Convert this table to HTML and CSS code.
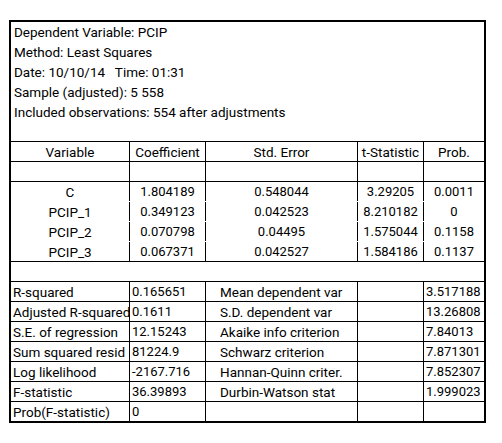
FILE: index.html
```html
<!DOCTYPE html>
<html lang="en">

<head>
    <meta charset="UTF-8" />
    <title>PCIP - Least Squares</title>
    <link rel="stylesheet" href="styles.css">
</head>

<body>
    <div class="sheet">
        <div class="info">
            <p>Dependent Variable: PCIP</p>
            <p>Method: Least Squares</p>
            <p>Date: 10/10/14   Time: 01:31</p>
            <p>Sample (adjusted): 5 558</p>
            <p>Included observations: 554 after adjustments</p>
            <p></p>
        </div>

        <div class="row head">
            <div class="cell">Variable</div>
            <div class="cell">Coefficient</div>
            <div class="cell">Std. Error</div>
            <div class="cell">t-Statistic</div>
            <div class="cell">Prob.</div>
        </div>
        <div class="row head">
            <div class="cell"></div>
            <div class="cell"></div>
            <div class="cell"></div>
            <div class="cell"></div>
            <div class="cell"></div>
        </div>

        <div class="row data">
            <div class="cell">C</div>
            <div class="cell">1.804189</div>
            <div class="cell">0.548044</div>
            <div class="cell">3.29205</div>
            <div class="cell">0.0011</div>
        </div>
        <div class="row data">
            <div class="cell">PCIP_1</div>
            <div class="cell">0.349123</div>
            <div class="cell">0.042523</div>
            <div class="cell">8.210182</div>
            <div class="cell">0</div>
        </div>
        <div class="row data">
            <div class="cell">PCIP_2</div>
            <div class="cell">0.070798</div>
            <div class="cell">0.04495</div>
            <div class="cell">1.575044</div>
            <div class="cell">0.1158</div>
        </div>
        <div class="row data last">
            <div class="cell">PCIP_3</div>
            <div class="cell">0.067371</div>
            <div class="cell">0.042527</div>
            <div class="cell">1.584186</div>
            <div class="cell">0.1137</div>
        </div>

        <div class="row gap"></div>

        <div class="row stat">
            <div class="cell">R-squared</div>
            <div class="cell">0.165651</div>
            <div class="cell">Mean dependent var</div>
            <div class="cell"></div>
            <div class="cell">3.517188</div>
        </div>
        <div class="row stat">
            <div class="cell">Adjusted R-squared</div>
            <div class="cell">0.1611</div>
            <div class="cell">S.D. dependent var</div>
            <div class="cell"></div>
            <div class="cell">13.26808</div>
        </div>
        <div class="row stat">
            <div class="cell">S.E. of regression</div>
            <div class="cell">12.15243</div>
            <div class="cell">Akaike info criterion</div>
            <div class="cell"></div>
            <div class="cell">7.84013</div>
        </div>
        <div class="row stat">
            <div class="cell">Sum squared resid</div>
            <div class="cell">81224.9</div>
            <div class="cell">Schwarz criterion</div>
            <div class="cell"></div>
            <div class="cell">7.871301</div>
        </div>
        <div class="row stat">
            <div class="cell">Log likelihood</div>
            <div class="cell">-2167.716</div>
            <div class="cell">Hannan-Quinn criter.</div>
            <div class="cell"></div>
            <div class="cell">7.852307</div>
        </div>
        <div class="row stat">
            <div class="cell">F-statistic</div>
            <div class="cell">36.39893</div>
            <div class="cell">Durbin-Watson stat</div>
            <div class="cell"></div>
            <div class="cell">1.999023</div>
        </div>
        <div class="row stat last">
            <div class="cell">Prob(F-statistic)</div>
            <div class="cell">0</div>
            <div class="cell"></div>
            <div class="cell"></div>
            <div class="cell"></div>
        </div>
    </div>
</body>

</html>
```

FILE: styles.css
```css
body {
    margin: 0;
    background: #fff;
    color: #000;
    font-family: Roboto, 'Liberation Sans', sans-serif;
    font-size: 13.5px;
}

.sheet {
    width: 477px;
    margin: 20px 0 0 9px;
    border: 2px solid #000;
    box-sizing: border-box;
}

.info {
    height: 120px;
    border-bottom: 1px solid #000;
    box-sizing: border-box;
}

.info p {
    margin: 0;
    height: 20px;
    line-height: 21px;
    padding-left: 3px;
    white-space: pre;
}

.row {
    display: grid;
    grid-template-columns: 119px 76px 152px 66px 60px;
    grid-template-rows: 19px;
    height: 20px;
    border-bottom: 1px solid #000;
    box-sizing: border-box;
}

.cell {
    line-height: 20px;
    border-right: 1px solid #000;
    overflow: hidden;
    white-space: nowrap;
}

.cell:last-child {
    border-right: none;
}

/* numeric columns */
.data .cell:not(:first-child),
.stat .cell:nth-child(2),
.stat .cell:nth-child(5) {
    font-size: 13px;
}

.head .cell,
.data .cell {
    text-align: center;
}

.row.data {
    border-bottom: none;
}

.row.data.last {
    border-bottom: 1px solid #000;
}

.stat .cell {
    padding-left: 2px;
}

.stat .cell:nth-child(3) {
    padding-left: 14px;
}

.row.stat.last {
    height: 19px;
    border-bottom: none;
}
```
